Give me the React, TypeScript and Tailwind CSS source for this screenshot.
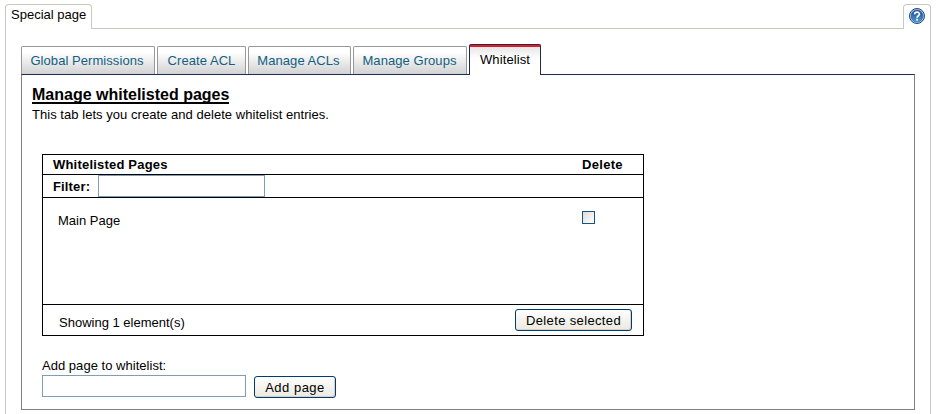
const tabs = [
  { label: "Global Permissions", box: "w-[134px]", text: "pr-[7px]" },
  { label: "Create ACL", box: "w-[89px]", text: "tracking-[0.06px]" },
  { label: "Manage ACLs", box: "w-[103px]", text: "pr-[7px]" },
  { label: "Manage Groups", box: "w-[114px]", text: "pr-[6px]" },
];

function HelpIcon() {
  return (
    <svg width="16" height="16" viewBox="0 0 16 16">
      <defs>
        <linearGradient id="help" x1="0" y1="0" x2="0" y2="1">
          <stop offset="0" stopColor="#1d4d8c" />
          <stop offset="1" stopColor="#4a9ad6" />
        </linearGradient>
      </defs>
      <circle cx="8" cy="8" r="7.5" fill="#b5d0ea" stroke="#1c4683" />
      <circle cx="8" cy="8" r="6" fill="url(#help)" stroke="#25619f" strokeWidth="0.6" />
      <path d="M5.7 6.3C5.7 3.6 10.4 3.5 10.4 6.1C10.4 7.7 8.1 7.8 8.1 9.7" fill="none" stroke="#fff" strokeWidth="1.7" />
      <rect x="7.2" y="10.8" width="1.8" height="1.8" fill="#fff" />
    </svg>
  );
}

const buttonStyle =
  "h-[22px] whitespace-nowrap rounded-[3px] border border-[#003c74] bg-linear-to-b from-white via-[#f4f3ee] to-[#ece9e0] text-center leading-[21px] shadow-[inset_-1px_-1px_0_#d6d0c5]";

export default function App() {
  return (
    <div className="flex h-[414px] w-[936px] flex-col overflow-hidden bg-white pl-[5px] pt-1 font-['Liberation_Sans',Arial,sans-serif] text-[13px] leading-[15px] text-black">
      <div className="z-10 flex h-[25px] w-[926px] justify-between">
        <div className="h-[25px] w-[87px] whitespace-nowrap rounded-t-[4px] border border-b-0 border-[#c8c8c0] bg-white pl-[5px] pt-[2px]">
          Special page
        </div>
        <div className="flex h-[25px] w-7 justify-center rounded-t-[4px] border border-b-0 border-[#c8c8c0] bg-white pt-[3px]">
          <HelpIcon />
        </div>
      </div>
      <div className="-mt-px h-[386px] w-[926px] border border-b-0 border-[#c8c8c0] pl-[15px] pt-[15px]">
        <div className="flex h-[30px] items-end gap-[2px]">
          {tabs.map((t) => (
            <button
              key={t.label}
              className={`h-7 whitespace-nowrap rounded-t-[2px] border border-b-0 border-[#989898] bg-linear-to-b from-white from-20% to-[#d2d2d4] px-[5px] text-center tracking-[0.06px] text-[#126080] ${t.box} ${t.text}`}
            >
              {t.label}
            </button>
          ))}
          <button className="z-10 h-[31px] w-[72px] self-start rounded-t-[2px] border border-b-0 border-[#1b2a57] bg-linear-to-b from-[#e2e2e2] to-white to-45%">
            <span className="block h-[30px] border-t-2 border-[#e8191c] pt-[5px] tracking-[0.1px]">Whitelist</span>
          </button>
        </div>
        <div className="h-[336px] w-[894px] border border-[#808080] border-t-[#1b2a57] pl-[10px] pt-[11px]">
          <h1 className="h-[20px] text-base font-bold">
            <span className="block h-[18px] w-fit border-b-2 border-black leading-[17px]">Manage whitelisted pages</span>
          </h1>
          <p className="mt-px tracking-[0.04px]">This tab lets you create and delete whitelist entries.</p>
          <div className="ml-[10px] mt-[32px] flex h-[182px] w-[602px] flex-col border border-black">
            <div className="flex h-5 border-b border-black pl-[10px] pt-[2px] font-bold">
              <span className="w-[529px] tracking-[0.2px]">Whitelisted Pages</span>
              <span className="tracking-[0.3px]">Delete</span>
            </div>
            <div className="flex h-[23px] border-b border-black pl-[10px]">
              <span className="w-[45px] pt-1 font-bold tracking-[0.15px]">Filter:</span>
              <input className="h-[22px] w-[167px] border border-[#7f9db9]" />
            </div>
            <div className="flex h-[107px] border-b border-black pl-[15px] pt-[13px]">
              <span className="w-[524px] pt-[2px]">Main Page</span>
              <span className="size-[13px] border border-[#1c5180] bg-linear-to-br from-[#dcdcd7] to-white" />
            </div>
            <div className="flex h-[30px] justify-between pl-4 pr-[11px] pt-1">
              <span className="pt-[6px]">Showing 1 element(s)</span>
              <button className={`w-[117px] tracking-[0.36px] ${buttonStyle}`}>Delete selected</button>
            </div>
          </div>
          <div className="ml-[10px] mt-[22px] tracking-[0.03px]">Add page to whitelist:</div>
          <div className="ml-[10px] mt-[2px] flex gap-2">
            <input className="h-[22px] w-[204px] border border-[#7f9db9]" />
            <button className={`mt-px w-[82px] tracking-[0.5px] ${buttonStyle}`}>Add page</button>
          </div>
        </div>
      </div>
    </div>
  );
}
